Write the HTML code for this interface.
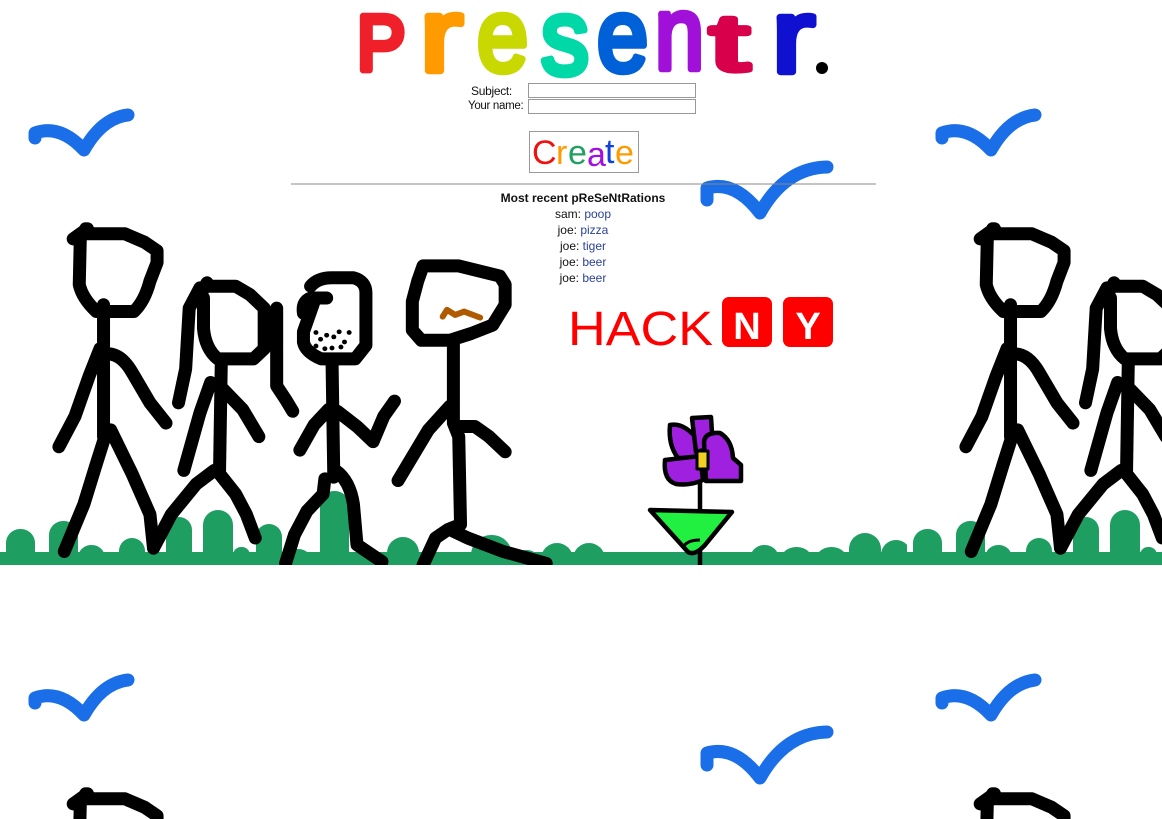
<!DOCTYPE html>
<html><head><meta charset="utf-8"><style>
html,body{margin:0;padding:0;width:1162px;height:819px;overflow:hidden;background:#fff;font-family:"Liberation Sans",sans-serif}
#bg{position:absolute;left:0;top:0}
.lbl{position:absolute;font-size:12px;color:#111;letter-spacing:-0.3px}
.inp{position:absolute;left:528px;width:166px;height:13px;border:1px solid #999;background:#fff}
.c{position:absolute;left:0;width:1166px;text-align:center;font-size:12px;color:#111}
.c a{color:#2a3f9a;text-decoration:none}
</style></head><body>
<svg id="bg" width="1162" height="819" viewBox="0 0 1162 819">
<defs>
<clipPath id="tc"><rect x="0" y="0" width="907" height="565"/></clipPath>
<g id="tile" clip-path="url(#tc)">
 <g fill="#1f9e62">
  <rect x="0" y="552" width="907" height="20"/>
  <rect x="6" y="529" width="29" height="80" rx="14"/>
  <rect x="49" y="521" width="29" height="80" rx="14"/>
  <rect x="78" y="545" width="27" height="60" rx="13"/>
  <rect x="119" y="538" width="26" height="60" rx="13"/>
  <rect x="166" y="517" width="26" height="80" rx="13"/>
  <rect x="203" y="510" width="30" height="80" rx="15"/>
  <rect x="233" y="547" width="17" height="60" rx="8"/>
  <rect x="256" y="524" width="26" height="80" rx="13"/>
  <rect x="282" y="549" width="32" height="60" rx="16"/>
  <rect x="320" y="491" width="29" height="100" rx="14"/>
  <rect x="349" y="554" width="23" height="60" rx="11"/>
  <rect x="387" y="537" width="32" height="60" rx="16"/>
  <rect x="419" y="552" width="52" height="60" rx="16"/>
  <rect x="471" y="535" width="41" height="60" rx="20"/>
  <rect x="512" y="550" width="29" height="60" rx="14"/>
  <rect x="541" y="543" width="32" height="60" rx="16"/>
  <rect x="573" y="543" width="32" height="60" rx="16"/>
  <rect x="610" y="558" width="35" height="60" rx="12"/>
  <rect x="651" y="560" width="93" height="60" rx="10"/>
  <rect x="750" y="545" width="29" height="60" rx="14"/>
  <rect x="779" y="547" width="35" height="60" rx="17"/>
  <rect x="814" y="547" width="35" height="60" rx="17"/>
  <rect x="849" y="533" width="32" height="60" rx="16"/>
  <rect x="881" y="540" width="30" height="60" rx="15"/>
 </g>
 <g fill="none" stroke="#1a6ee8" stroke-width="13" stroke-linecap="round" stroke-linejoin="round">
  <path d="M35,138 L35,133 Q60,124 84,150 Q102,118 128,115"/>
  <path d="M707,200 L707,188 Q735,180 760,213 Q785,168 827,167"/>
 </g>
 <g transform="translate(0,200) scale(0.357,0.338)" fill="none" stroke="#000" stroke-linecap="round" stroke-linejoin="round">
  <g stroke-width="13">
  <path vector-effect="non-scaling-stroke" d="M240,85 L225,110 L222,250 Q230,290 270,330 L375,330 Q405,300 420,240 L440,185 L440,150 L405,125 L350,100 L240,100 M205,115 L245,85 M290,310 L290,700 M280,440 L250,520 L210,640 L165,730 M300,455 Q340,455 370,510 L420,600 L465,660 M300,680 L270,780 L235,900 L180,1040 M310,680 L370,810 L420,930 L430,1030"/>
  <path vector-effect="non-scaling-stroke" d="M580,245 L555,290 M570,290 L570,380 Q575,440 610,470 L710,470 L740,440 L740,320 L700,280 L660,255 L580,255 M560,260 L530,320 L520,500 L500,600 M775,320 L775,550 L800,590 L820,625 M620,470 L615,800 M590,540 L560,630 L515,800 M625,560 L680,620 L725,700 M600,800 L550,840 L480,930 L430,1030 M615,810 L660,870 L690,930 L715,1000"/>
  <path vector-effect="non-scaling-stroke" d="M870,255 Q890,230 930,230 L990,230 Q1025,240 1025,275 L1025,430 L995,470 L900,470 Q855,450 850,420 L850,390 L880,300 M850,335 Q845,300 870,290 L915,290 M930,470 L935,820 M920,620 L880,665 L840,740 M945,625 L1000,670 L1045,715 L1075,640 L1105,595 M910,825 L905,870 L860,920 L825,990 L800,1075 M940,800 Q980,830 990,900 L1000,1020 L1070,1070"/>
  <path vector-effect="non-scaling-stroke" d="M1185,195 L1285,195 L1400,225 L1415,250 L1415,310 L1380,370 L1320,395 L1260,415 L1180,415 L1155,385 L1155,300 L1170,240 Z M1270,420 L1270,660 L1285,700 L1290,960 L1255,975 L1220,1000 L1185,1080 M1260,610 L1200,680 L1115,830 M1275,670 L1330,670 L1370,700 L1415,745 M1260,975 L1310,1000 L1410,1040 L1530,1075"/>
  <path vector-effect="non-scaling-stroke" stroke="#b05a00" stroke-width="6" d="M1240,345 L1252,325 L1275,340 L1300,330 L1345,348"/>
  </g>
  <g fill="#000" stroke="none">
   <circle cx="885" cy="392" r="7"/><circle cx="915" cy="400" r="7"/><circle cx="950" cy="390" r="7"/><circle cx="978" cy="392" r="7"/><circle cx="898" cy="412" r="7"/><circle cx="935" cy="405" r="7"/><circle cx="965" cy="420" r="7"/><circle cx="885" cy="432" r="7"/><circle cx="910" cy="440" r="7"/><circle cx="930" cy="438" r="7"/><circle cx="955" cy="435" r="7"/>
  </g>
 </g>
 <g stroke="#000" stroke-width="4.5" stroke-linejoin="round">
  <path d="M700,470 L700,565" fill="none"/>
  <path d="M650,510 L732,512 L705,545 Q695,556 688,552 Z" fill="#22f040"/>
  <path d="M683,548 Q686,540 700,540" fill="none" stroke-width="3"/>
  <path d="M670,425 Q684,422 698,440 L699,458 L678,458 Q668,445 670,425 Z" fill="#a020e0"/>
  <path d="M692,418 L711,417 L713,448 L696,452 Z" fill="#a020e0"/>
  <path d="M704,442 Q705,432 720,433 Q732,440 733,458 L741,465 L741,481 L706,481 Z" fill="#a020e0"/>
  <path d="M665,460 L700,456 L703,480 Q690,486 676,484 Q663,480 665,460 Z" fill="#a020e0"/>
  <rect x="697" y="451" width="11" height="18" fill="#f0d020" stroke-width="3"/>
 </g>
 <text x="568" y="345" font-family="Liberation Sans,sans-serif" font-size="48" fill="#f00" textLength="145" lengthAdjust="spacingAndGlyphs">HACK</text>
 <rect x="722" y="297" width="50" height="50" rx="7" fill="#f00"/>
 <rect x="783" y="297" width="50" height="50" rx="7" fill="#f00"/>
 <text x="747" y="339" text-anchor="middle" font-family="Liberation Sans,sans-serif" font-weight="bold" font-size="38" fill="#fff">N</text>
 <text x="808" y="339" text-anchor="middle" font-family="Liberation Sans,sans-serif" font-weight="bold" font-size="38" fill="#fff">Y</text>
</g>
</defs>
<use href="#tile" x="0" y="0"/><use href="#tile" x="907" y="0"/>
<use href="#tile" x="0" y="565"/><use href="#tile" x="907" y="565"/>
<line x1="291" y1="184" x2="876" y2="184" stroke="#888" stroke-width="1"/>
<g font-family="Liberation Sans,sans-serif" stroke-width="5" stroke-linejoin="round" stroke-linecap="round">
 <text transform="translate(357,70) scale(1.25,1.35)" font-size="58" fill="#f0202a" stroke="#f0202a">P</text>
 <text transform="translate(420,71) scale(1.6,1.3)" font-size="80" fill="#ff9a00" stroke="#ff9a00">r</text>
 <text transform="translate(477,71) scale(1.15,1.3)" font-size="80" fill="#c8d800" stroke="#c8d800">e</text>
 <text transform="translate(541,74) scale(1.2,1.35)" font-size="80" fill="#00d8a8" stroke="#00d8a8">s</text>
 <text transform="translate(597,71) scale(1.15,1.3)" font-size="80" fill="#0060d8" stroke="#0060d8">e</text>
 <text transform="translate(655,69) scale(1.1,1.3)" font-size="80" fill="#a010d8" stroke="#a010d8">n</text>
 <text transform="translate(710,70) scale(2.1,1.2)" font-size="66" fill="#d8004a" stroke="#d8004a">t</text>
 <text transform="translate(772,72) scale(1.6,1.3)" font-size="80" fill="#1010d0" stroke="#1010d0">r</text>
 <circle cx="822" cy="68" r="6" fill="#000" stroke="none"/>
</g>
<rect x="529.5" y="131.5" width="109" height="41" fill="#fff" stroke="#999"/>
<g font-family="Liberation Sans,sans-serif" font-size="34">
 <text x="532" y="164" fill="#f01010">C</text>
 <text x="556" y="164" fill="#ff9a00">r</text>
 <text x="568" y="164" fill="#20a060">e</text>
 <text x="587" y="166" fill="#a010e0">a</text>
 <text x="605" y="163" fill="#1040e0">t</text>
 <text x="615" y="164" fill="#ff9a00">e</text>
</g>
</svg>
<div class="lbl" style="left:471px;top:84px">Subject:</div>
<div class="lbl" style="left:468px;top:100px;font-size:11.5px">Your name:</div>
<div class="inp" style="top:83px"></div>
<div class="inp" style="top:99px"></div>
<div class="c" style="top:191px;font-weight:bold">Most recent pReSeNtRations</div>
<div class="c" style="top:207px">sam: <a>poop</a></div>
<div class="c" style="top:223px">joe: <a>pizza</a></div>
<div class="c" style="top:239px">joe: <a>tiger</a></div>
<div class="c" style="top:255px">joe: <a>beer</a></div>
<div class="c" style="top:271px">joe: <a>beer</a></div>
</body></html>
